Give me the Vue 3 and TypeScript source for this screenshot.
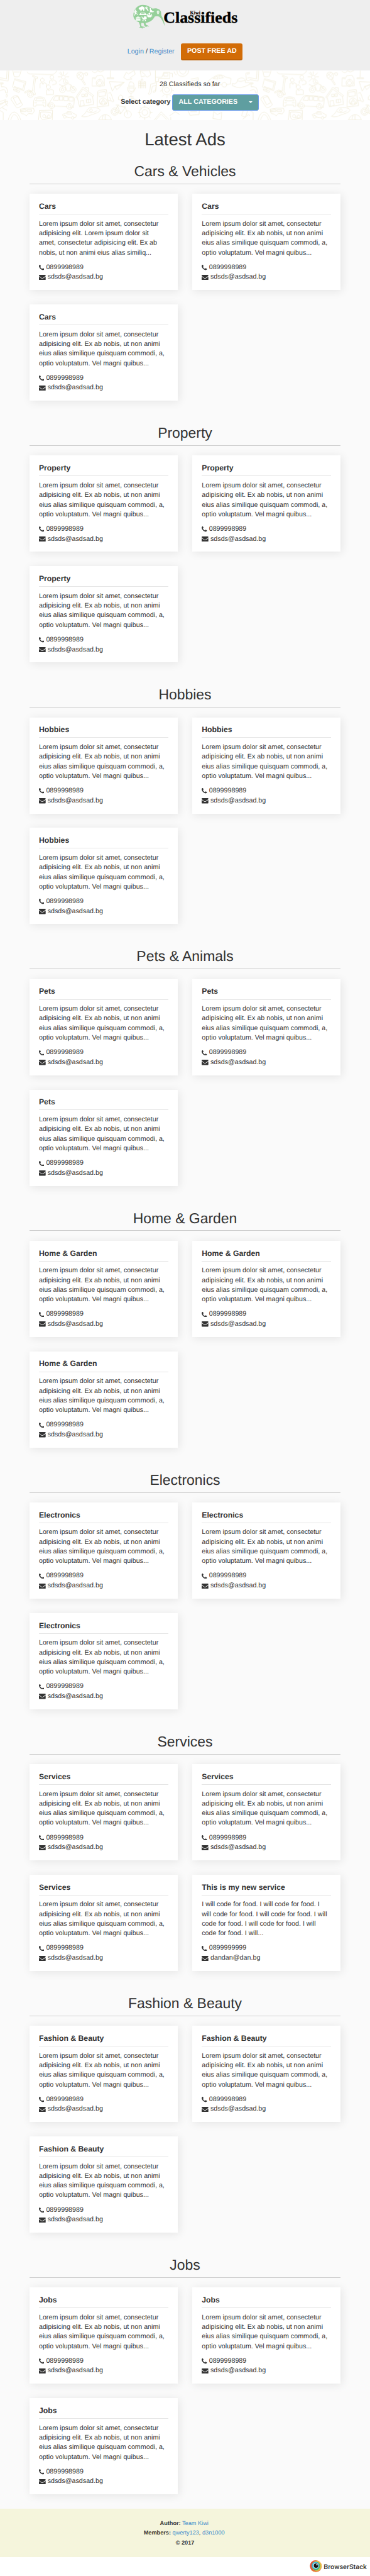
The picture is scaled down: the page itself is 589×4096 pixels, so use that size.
<script setup lang="ts">
interface Ad {
  title: string
  text: string
  phone: string
  email: string
}
interface Section {
  name: string
  ads: Ad[]
}

const lorem =
  'Lorem ipsum dolor sit amet, consectetur\nadipisicing elit. Ex ab nobis, ut non animi\neius alias similique quisquam commodi, a,\noptio voluptatum. Vel magni quibus...'
const loremLong =
  'Lorem ipsum dolor sit amet, consectetur\nadipisicing elit. Lorem ipsum dolor sit\namet, consectetur adipisicing elit. Ex ab\nnobis, ut non animi eius alias similiq...'
const food =
  'I will code for food. I will code for food. I\nwill code for food. I will code for food. I will\ncode for food. I will code for food. I will\ncode for food. I will...'

const ad = (title: string, text = lorem, phone = '0899998989', email = 'sdsds@asdsad.bg'): Ad => ({
  title,
  text,
  phone,
  email,
})
const three = (title: string): Ad[] => [ad(title), ad(title), ad(title)]

const sections: Section[] = [
  { name: 'Cars & Vehicles', ads: [ad('Cars', loremLong), ad('Cars'), ad('Cars')] },
  { name: 'Property', ads: three('Property') },
  { name: 'Hobbies', ads: three('Hobbies') },
  { name: 'Pets & Animals', ads: three('Pets') },
  { name: 'Home & Garden', ads: three('Home & Garden') },
  { name: 'Electronics', ads: three('Electronics') },
  {
    name: 'Services',
    ads: [...three('Services'), ad('This is my new service', food, '0899999999', 'dandan@dan.bg')],
  },
  { name: 'Fashion & Beauty', ads: three('Fashion & Beauty') },
  { name: 'Jobs', ads: three('Jobs') },
]
</script>

<template>
  <div class="page">
    <header class="header">
      <svg class="logo" viewBox="0 0 870 240">
        <g transform="translate(75 15)">
          <path
            fill="#96d09a"
            d="M36 84C34 44 62 14 96 15C124 15 138 28 156 39C176 34 200 38 207 56C211 66 208 74 212 84C223 102 231 125 231 147C222 120 211 101 197 89C187 84 176 86 170 88C160 108 142 124 115 127L112 131L116 140L130 146L134 151L122 149L115 154L108 149L104 143L100 129L86 128L84 140L88 149L104 153L109 158L94 157L92 164L85 158L72 158L79 152L77 142L70 123C50 116 37 102 36 84Z"
          />
          <g fill="#fff">
            <path d="M69 36q6-8 14-8l6-4q10 0 13 6l5 11-3 4v9h-5l-3-10-7 2-3 9h-5l-2-10-4-2-3 6z" />
            <path d="M107 27l6 5 5-1 0-6q7 2 6 9l-1 4 8 13q-2 5-6 2l-9-13q-10-3-9-13z" />
            <path d="M138 31l4 4 4 2-2 6 8 7 7 8 5-3 2 2-6 4h-24l4-5-1-13z" />
            <circle cx="49" cy="49" r="4.500" />
            <path d="M42 55l11-1 8 6-2 2-6-2 1 8 9 3 3 8h-3l-3-5-10-4-4 12h-4l4-21-6 5-1-2z" />
            <path d="M76 72l5-8h28l5 7 5 2v6H74v-6zM84 68l-2 4h26l-3-4z" fill-rule="evenodd" />
            <path d="M51 93h8v-4h12v4h9v8l-29 1zM51 104h29v9H51zM62 91v2h6v-2z" fill-rule="evenodd" />
            <path d="M86 89h5l3 6h8l2-9q14 0 16 11l-1 5q-8 8-20 6l-5-3z" />
            <circle cx="96" cy="113" r="3.500" />
            <circle cx="111" cy="113" r="3.500" />
            <circle cx="136" cy="71" r="6" />
            <circle cx="125" cy="74" r="4" />
            <circle cx="148" cy="74" r="4" />
            <path d="M119 88v-6l7-3 10 1 10-1 8 3v5l-7 1-1 5h-19l-1-5z" />
            <path fill-rule="evenodd" d="M190 51q8 0 8 9q0 6-8 16q-8-10-8-16q0-9 8-9zm0 6a3.500 3.500 0 1 0 .1 0z" />
          </g>
        </g>
        <text class="brand" x="299" y="141" textLength="463" lengthAdjust="spacingAndGlyphs">Classifieds</text>
        <text class="brand-top" x="465" y="90" textLength="64" lengthAdjust="spacingAndGlyphs">Kiwi</text>
      </svg>
      <nav class="nav">
        <span><a>Login</a> / <a>Register</a></span>
        <button class="post">POST FREE AD</button>
      </nav>
    </header>

    <section class="banner">
      <svg class="doodles" viewBox="0 18 2310 312">
        <defs>
          <pattern id="doodle" width="1560" height="348" patternUnits="userSpaceOnUse">
            <g fill="none" stroke="#f2eddb" stroke-width="3.500" stroke-linejoin="round" stroke-linecap="round">
              <!-- monitor, cup, sofa -->
              <path d="M55 18l-4 66-51-8M44 18l-3 53-41-7M80 18l8 38q22 6 34-4l10-34M88 28l34 0M170 28q6 14 22 12l130 4q20 0 32-24" />
              <!-- flower, racket -->
              <path d="M396 60m-12 0a12 12 0 1 0 24 0a12 12 0 1 0-24 0M396 26v18M396 78v12M362 58h16M414 58h16M370 34l14 14M408 72l16 14M422 34l-14 14M384 72l-14 14M378 28l10 17M404 76l8 14" />
              <path d="M480 50q0-22 20-22q24 4 22 28q-4 18-20 18q-20-4-22-24zM486 38l34 30M482 54l26-24M490 66l30-30M506 74l22 34 6-3-19-33M528 36q8-10 20 0q2 14-10 14q-10-2-10-14" />
              <!-- faucet -->
              <path d="M0 96h20v6H0M8 102v18q14-2 30 4q10 10 8 34l-12-1q0-18-10-20L0 144M42 166q-10 16 0 18q8-4 0-18" />
              <!-- computer -->
              <path d="M92 70l70 18-14 56-68-22zM96 78l56 16-10 42-54-18M84 134l40 14-6 8-30-12zM108 130l-4 10" />
              <!-- scooter -->
              <path d="M206 48q14 6 18 12q14-8 8 10l-10-2-10 80q12 10 8 22l-10-2q-8-20-32-20l-22 12-2-8 26-12 22 8 12-88-10-4zM190 148a19 19 0 1 0 .1 0M190 157a10 10 0 1 0 .1 0" />
              <!-- people -->
              <path d="M264 66a12 12 0 1 0 .1 0M250 128v-28l12-6 6 12 8-12 14 8v18M324 48a12 12 0 1 0 .1 0M308 98v-14l12-8 6 10 8-10 16 10v16l-22 6M302 108a13 13 0 1 0 .1 0M290 168v-26l12-6 4 10 10-10 18 6v24z" />
              <!-- motorbike -->
              <path d="M390 118a19 19 0 1 0 .1 0M390 128a9 9 0 1 0 .1 0M456 118a19 19 0 1 0 .1 0M456 128a9 9 0 1 0 .1 0M370 106q20 12 34 4l20-10 20 10 14 24M404 110l14 36h18l8-36M398 98l30-4" />
              <!-- camera -->
              <path d="M578 64l22-2 6-12 32-2 6 12 6 6 2 48-76 2zM622 74a22 22 0 1 0 .1 0M622 83a13 13 0 1 0 .1 0M584 70l14 0" />
              <!-- phone -->
              <path d="M78 184q20-16 34-6l28 52q-4 14-28 20-8 2-12-4l-32-48q0-10 10-14zM84 190l26-10 22 38-26 14z" />
              <!-- small car, shell -->
              <path d="M210 210l6-20q34-14 62 0l8 22v30h-14v-8h-48v8h-14zM222 206l8-14h36l8 14zM216 220h14M264 220h14" />
              <path d="M0 212l36-12q4 8-12 18l-24 16M0 226l48-16q4 14-18 26L0 256M28 208l18 32M12 250l30 16M0 268l20 12 0 50" />
              <!-- van -->
              <path d="M300 234l24-40q8-16 22-20q60-2 110 10q8 2 8 12l-4 52-20 2M418 244l-78-4M310 242l-14-2 4-20M322 220a18 18 0 1 0 .1 0M322 229a9 9 0 1 0 .1 0M434 224a18 18 0 1 0 .1 0M434 233a9 9 0 1 0 .1 0M332 202l14-22 18-2v26zM372 180h20v24h-20zM400 182h24v24h-24zM432 186h24v24l-24-2z" />
              <!-- house -->
              <path d="M474 184l44-62 68 54-8 6-60-48-38 56zM484 192l12 52 88-14-6-50M532 130l2-6 18 2 2 20M512 166h14v16h-14zM532 164h14v16h-14zM502 208l20-3 4 32-22 4zM540 200l26-4 2 20-26 4zM554 198v20" />
              <!-- gas pump -->
              <path d="M610 150q2-8 12-8l42-4 14 100-70 8zM618 154l38-4 2 26-38 6zM678 160l12-4 20 54q-6 8-14 0l-12-24M676 204l16 4M644 190a24 22 0 1 0 .1 0M644 198l-8 12h16zM632 214l-6 12h12zM658 214l-8 12h14z" />
              <!-- paper plane, plug -->
              <path d="M684 88l92 4-46 46-12-18-16 26zM776 92l-58 28M714 118l44-10M690 18l-2 46h-20v6h42v-6h-18M576 24q20 18 32-4l20 8 22-10" />
              <!-- bus, alarm, socket -->
              <path d="M126 260q40-10 84-6l4 18-12 18-24-4-14 16-12-12q-30 2-24-30zM132 268l30-6 0 12-30 2zM170 264h28v10h-28z" />
              <path d="M50 330q14-56 42-52q26 8 38 52M66 330q10-38 26-36q18 6 24 36M246 268l82-2-2 64M246 268l-6 62M252 280q2-6 62 0q10 4 4 36l-50 8q-20-2-16-44M276 294a10 9 0 1 0 .1 0M304 296a10 9 0 1 0 .1 0M282 312q8-8 18 2" />
              <!-- sport car -->
              <path d="M388 296q4-8 18-8l14-12q28-4 38 10l18 8-2 16-16 2M446 314l-34-6M394 302l-4-6M404 298a9 9 0 1 0 .1 0M454 304a9 9 0 1 0 .1 0M416 288l8-10 10 0 14 12z" />
              <!-- hat, umbrella -->
              <path d="M510 304q20-12 30-32q12-26 34-22q20-6 46 8q14 10-12 24l-40 14q-40 20-58 8zM546 276q30 14 58-6M568 258a9 9 0 1 0 .1 0M616 326q12-32 42-32q30 2 38 32q-12-6-20 0q-16-6-22 0q-20-4-38 0zM656 294v36M644 300q-6 10-6 24" />
              <!-- bicycle -->
              <path d="M716 252a23 23 0 1 0 .1 0M716 260a15 15 0 1 0 .1 0M798 270a22 22 0 1 0 .1 0M716 276l18-38 48 10 16 44M734 242l20 46 28-40M754 288l-38-12M724 234l18 0M772 246l14-6M740 182l14-12 14 12-6 22-22-4z" />
              <!-- microphone, equalizer -->
              <path d="M812 90q20-4 24 16l0 34q-4 12-18 10q-16-4-14-24q-2-32 8-36zM796 122q0 34 20 40q20-2 30-36M818 164v20M802 184q16-8 32 0M804 116h30M808 128h26M866 128V84h10v44M882 128V72h10v56M898 128V88h10v40M866 98h42M866 112h42" />
              <!-- notes, gears -->
              <path d="M934 152l6-48 38-10-6 54q-16 14-16 2q4-8 14-4l4-36-24 8-6 40q-16 18-18 4zM1042 110a30 30 0 1 0 .1 0M1042 124a15 15 0 1 0 .1 0M1000 148l12-8M1084 144l-12-4M1012 116l12 6M1060 172l10 10M1022 172l-8 8M1042 176v12" />
              <path d="M904 246a34 34 0 1 0 .1 0M904 262a18 18 0 1 0 .1 0M904 236v12M904 312v14M862 280h14M936 280h14M874 250l10 8M928 304l10 8M934 250l-10 8M880 304l-10 8" />
              <!-- recycle, tv -->
              <path d="M772 60l16-30 14 10 36-22 6 24-32 22 12 8-30 4zM876 20l58-2 6 28-20 14-12-8-24 6zM886 28l20 16M970 18v42h40l12-30h38v38h-70v20h-20V60M1024 36h24v18h-24zM1060 36h16v22" />
              <path d="M1104 18q0 38 38 38q34-6 36-38M1120 18q2 20 22 24q18-4 20-24M1086 26q4 16 14 20" />
              <!-- roofs -->
              <path d="M976 236l34-36 34 34M986 238l10-18M1000 220h20v14M960 330l46-54 48 48M970 330l36-40 34 34M1060 300l34-24 26 16M1066 310v18" />
              <path d="M820 216l2-26 44 18-26 18M1174 270l12 28 56-4 2-24M1190 276l38 0M1336 276l20 18 28-14-4 46-50-8z" />
              <!-- sedan -->
              <path d="M1300 84l20-16 34-20q38-6 50 10l38 10-2 34-28 4M1386 106l-48-6M1300 84l-2 14 12 4M1324 88a15 15 0 1 0 .1 0M1400 92a15 15 0 1 0 .1 0M1332 68l24-14 4 16zM1368 52q20-4 26 12l-24 4z" />
              <!-- calculator, cowboy hat -->
              <path d="M1192 72l46-8 6 70M1196 82l36-4M1204 94v30M1218 92v32M1232 90v32M1452 100q10 8 26-6l8-22q30-16 44 4l2 18q30-6 28 10q-60 36-108 10zM1484 84q20 8 44-4" />
              <!-- printer -->
              <path d="M1560 78q-20 8-22-4l-4-38 26-6M1542 42l18-4M1546 66l14-4M1518 270l-10 30 24 10 14-40M1516 322l34-28 10 6" />
            </g>
          </pattern>
        </defs>
        <rect x="0" y="18" width="2310" height="312" fill="url(#doodle)" />
      </svg>
      <div class="banner-body">
        <div class="count">28 Classifieds so far</div>
        <div class="picker">
          <strong>Select category</strong>
          <div class="select">
            <span>ALL CATEGORIES</span>
            <i class="caret"></i>
          </div>
        </div>
      </div>
    </section>

    <main class="main">
      <h1>Latest Ads</h1>
      <section v-for="s in sections" :key="s.name">
        <h2>{{ s.name }}</h2>
        <div class="grid">
          <article v-for="(a, i) in s.ads" :key="i" class="card">
            <h3>{{ a.title }}</h3>
            <p>{{ a.text }}</p>
            <div class="contact">
              <svg class="phone" viewBox="0 128 1408 1408">
                <path
                  fill="currentColor"
                  d="M1408 1240q0 27-10 70.500t-21 68.500q-21 50-122 106-94 51-186 51-27 0-53-3.500t-57.500-12.500-47-14.500-55.500-20.500-49-18q-98-35-175-83-127-79-264-216t-216-264q-48-77-83-175-3-9-18-49t-20.500-55.500-14.500-47-12.500-57.500-3.500-53q0-92 51-186 56-101 106-122 25-11 68.500-21t70.500-10q14 0 21 3 18 6 53 76 11 19 30 54t35 63.500 31 53.500q3 4 17.500 25t21.500 35.500 7 28.500q0 20-28.500 50t-62 55-62 53-28.500 46q0 9 5 22.500t8.500 20.500 14 24 11.500 19q76 137 174 235t235 174q2 1 19 11.500t24 14 20.500 8.500 22.500 5q18 0 46-28.500t53-62 55-62 50-28.500q14 0 28.500 7t35.500 21.500 25 17.500q25 15 53.500 31t63.500 35 54 30q70 35 76 53 3 7 3 21z"
                />
              </svg>
              <span>{{ a.phone }}</span>
            </div>
            <div class="contact">
              <svg class="mail" viewBox="0 256 1792 1408">
                <path
                  fill="currentColor"
                  d="M1792 710v794q0 66-47 113t-113 47h-1472q-66 0-113-47t-47-113v-794q44 49 101 87 362 246 497 345 57 42 92.500 65.500t94.500 48 110 24.500h2q51 0 110-24.500t94.500-48 92.500-65.500q170-123 498-345 57-39 100-87zm0-294q0 79-49 151t-122 123q-376 261-468 325-10 7-42.500 31t-54 38.500-52 32.500-57.500 27-50 9h-2q-23 0-50-9t-57.500-27-52-32.500-54-38.500-42.500-31q-91-64-262-182.500t-205-142.500q-62-42-117-115.500t-55-136.500q0-78 41.500-130t118.500-52h1472q65 0 112.500 47t47.500 113z"
                />
              </svg>
              <span>{{ a.email }}</span>
            </div>
          </article>
        </div>
      </section>
    </main>

    <footer class="footer">
      <div class="credit"><strong>Author:</strong> <a>Team Kiwi</a></div>
      <div class="credit"><strong>Members:</strong> <a>qwerty123</a>, <a>d3n1000</a></div>
      <div><strong>© 2017</strong></div>
    </footer>
    <div class="sponsor">
      <svg viewBox="0 0 450 117">
        <circle cx="113" cy="57" r="37" fill="#ee8b42" />
        <circle cx="109" cy="54" r="33" fill="#e2503c" />
        <circle cx="118" cy="54" r="31" fill="#f3bb45" />
        <circle cx="116" cy="58" r="28" fill="#b9c94c" />
        <circle cx="113" cy="54" r="26" fill="#3fae78" />
        <circle cx="111" cy="52" r="23" fill="#45b5d8" />
        <circle cx="113" cy="53" r="18" fill="#d8f0f7" />
        <circle cx="114" cy="53" r="14" fill="#141414" />
        <ellipse cx="120" cy="47" rx="4" ry="5" fill="#fff" />
        <text class="sponsor-name" x="162" y="75" textLength="268" lengthAdjust="spacingAndGlyphs">BrowserStack</text>
      </svg>
    </div>
  </div>
</template>

<style>
/* 1rem stands for ten design pixels */
html {
  font-size: 7.65px;
}
body {
  margin: 0;
  background: #fff;
}
</style>

<style scoped>
.page {
  font-family: 'Liberation Sans', Arial, sans-serif;
  font-size: 1.4rem;
  line-height: 2rem;
  color: #333;
  overflow: hidden;
  text-rendering: geometricPrecision;
}
h1,
h2,
h3,
p {
  margin: 0;
}
a {
  color: #428bca;
}
.header {
  height: 14.6rem;
  background: #eee;
  display: flex;
  flex-direction: column;
  align-items: center;
}
.logo {
  width: 29rem;
  height: 8rem;
  margin-bottom: 1rem;
}
.brand,
.brand-top {
  font-family: 'Liberation Serif', 'Times New Roman', serif;
  font-weight: 700;
  font-size: 96px;
  fill: #000;
  stroke: #000;
  stroke-width: 1.5px;
}
.brand-top {
  font-size: 33px;
  stroke-width: 0.5px;
}
.nav {
  display: flex;
  align-items: center;
  gap: 1.4rem;
}
.post {
  box-sizing: border-box;
  width: 12.8rem;
  height: 3.6rem;
  padding: 0;
  border: 0 solid #bf6106;
  border-bottom-width: 0.3rem;
  border-radius: 0.4rem;
  background: #d26c07;
  color: #fff;
  font: 700 1.4rem/2rem 'Liberation Sans', Arial, sans-serif;
  text-rendering: inherit;
  white-space: nowrap;
}
.banner {
  position: relative;
  height: 10.4rem;
  background: #fff;
}
.doodles {
  position: absolute;
  inset: 0;
  width: 77rem;
  height: 10.4rem;
}
.banner-body {
  position: relative;
  padding: 2rem 0 0 2rem;
  text-align: center;
}
.picker {
  display: flex;
  justify-content: center;
  align-items: center;
  gap: 0.4rem;
  margin-top: 1rem;
  white-space: nowrap;
}
.select {
  box-sizing: border-box;
  width: 18rem;
  height: 3.4rem;
  padding: 0 1.2rem;
  border: 1px solid #6a9be8;
  border-radius: 0.4rem;
  background: #5f9ea0;
  color: #fff;
  font-weight: 700;
  display: flex;
  align-items: center;
  justify-content: space-between;
}
.caret {
  border: 0.4rem solid transparent;
  border-top-color: #fff;
  border-bottom: 0;
}
.main {
  background: #fafafa;
  padding: 2rem 6.1rem 3rem;
}
h1 {
  font-size: 3.6rem;
  line-height: 4rem;
  font-weight: 400;
  text-align: center;
}
h2 {
  margin: 3rem 0 2rem;
  font-size: 3rem;
  line-height: 3.3rem;
  padding-bottom: 0.9rem;
  box-sizing: border-box;
  height: 4.3rem;
  border-bottom: 1px solid #ccc;
  font-weight: 400;
  text-align: center;
}
section + section h2 {
  margin-top: 5.1rem;
}
.grid {
  display: grid;
  grid-template-columns: 30.9rem 30.9rem;
  grid-auto-rows: 20rem;
  gap: 3rem;
}
.card {
  box-sizing: border-box;
  padding: 1.8rem 2rem;
  background: #fff;
  box-shadow: 0.2rem 0.3rem 1.8rem rgba(0, 0, 0, 0.09);
}
h3 {
  box-sizing: border-box;
  height: 2.5rem;
  font-size: 1.6rem;
  line-height: 1.8rem;
  font-weight: 700;
  border-bottom: 1px solid #e5e5e5;
}
.card p {
  margin: 1rem 0;
  white-space: pre;
}
.contact {
  display: flex;
  align-items: center;
  gap: 0.4rem;
  height: 2.05rem;
}
.phone {
  width: 1.1rem;
  height: 1.1rem;
}
.mail {
  width: 1.4rem;
  height: 1.1rem;
}
.footer {
  box-sizing: border-box;
  height: 10rem;
  padding-top: 2.1rem;
  background: #f5f5dc;
  font-size: 1.2rem;
  text-align: center;
}
.credit {
  padding-right: 0.35rem;
}
.sponsor {
  height: 3.9rem;
  display: flex;
  justify-content: flex-end;
  background: #fff;
}
.sponsor svg {
  width: 15rem;
  height: 3.9rem;
}
.sponsor-name {
  font-family: Roboto, 'Liberation Sans', sans-serif;
  font-weight: 500;
  font-size: 42px;
  fill: #333;
}
</style>
